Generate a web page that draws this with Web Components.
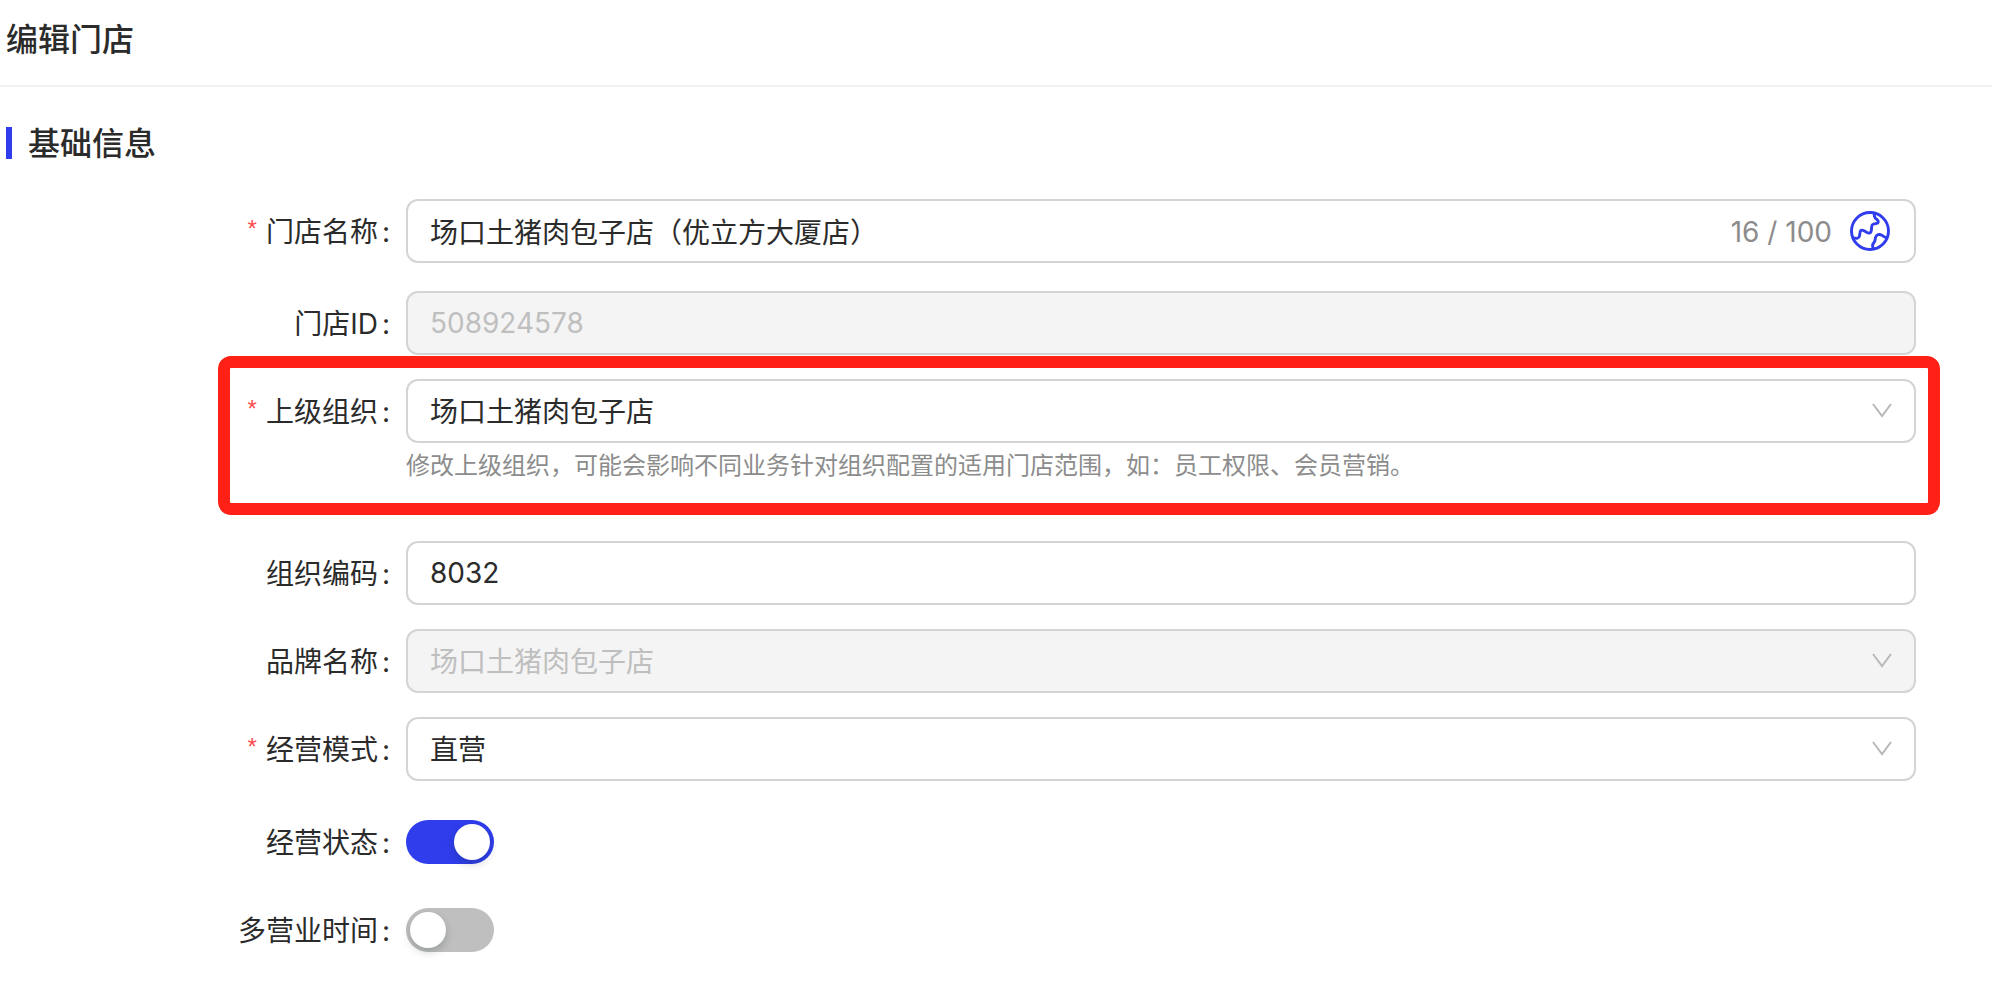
<!DOCTYPE html>
<html lang="zh-CN">
<head>
<meta charset="utf-8">
<meta name="viewport" content="width=device-width, initial-scale=1">
<title>编辑门店</title>
<style>
  body {
    margin: 0;
    background: #fff;
    color: #2b2b2b;
    font-family: Inter, "Noto Sans CJK SC", sans-serif;
    font-size: 28px;
  }
</style>
</head>
<body>
<store-page>
  <span slot="title">编辑门店</span>
  <form-section>
    <span slot="title">基础信息</span>
    <text-field label="门店名称" value="场口土猪肉包子店（优立方大厦店）" max="100" required></text-field>
    <text-field label="门店ID" value="508924578" disabled></text-field>
    <select-field label="上级组织" value="场口土猪肉包子店" required marked>修改上级组织，可能会影响不同业务针对组织配置的适用门店范围，如：员工权限、会员营销。</select-field>
    <text-field label="组织编码" value="8032"></text-field>
    <select-field label="品牌名称" value="场口土猪肉包子店" disabled></select-field>
    <select-field label="经营模式" value="直营" required></select-field>
    <switch-group>
      <switch-field label="经营状态" checked></switch-field>
      <switch-field label="多营业时间"></switch-field>
    </switch-group>
  </form-section>
</store-page>

<script>
'use strict';

(function () {
  class StorePage extends HTMLElement {
    constructor() {
      super();
      this.attachShadow({ mode: 'open' }).innerHTML = `
      <style>
        :host { display: block; }
        header {
          padding: 20px 6px 25px;
          border-bottom: 2px solid #f2f2f2;
        }
        h1 {
          margin: 0;
          font-size: 32px;
          font-weight: 500;
          line-height: 40px;
        }
        main { padding: 40px 76px 18px 0; }
      </style>
      <header><h1><slot name="title"></slot></h1></header>
      <main><slot></slot></main>
      `;
    }
  }

  class FormSection extends HTMLElement {
    constructor() {
      super();
      this.attachShadow({ mode: 'open' }).innerHTML = `
      <style>
        :host { display: block; }
        h2 {
          margin: 0 0 40px 6px;
          padding: 2px 0 0 16px;
          border-left: 6px solid #2f3dec;
          font-size: 32px;
          font-weight: 500;
          line-height: 30px;
        }
        form {
          display: flex;
          flex-direction: column;
          gap: 24px;
        }
      </style>
      <h2><slot name="title"></slot></h2>
      <form><slot></slot></form>
      `;
    }
  }

  class SwitchGroup extends HTMLElement {
    constructor() {
      super();
      this.attachShadow({ mode: 'open' }).innerHTML = `
      <style>
        :host {
          display: flex;
          flex-direction: column;
          gap: 24px;
          margin-top: 5px;
        }
      </style>
      <slot></slot>
      `;
    }
  }

  // Shared row: label column on the left, control on the right
  class BaseField extends HTMLElement {
    connectedCallback() {
      if (this.shadowRoot) return;
      this.attachShadow({ mode: 'open' }).innerHTML = `
      <style>
        :host {
          display: grid;
          grid-template-columns: 406px minmax(0, 1fr);
          position: relative;
        }
        label {
          display: flex;
          justify-content: flex-end;
          padding-top: 2px;
          line-height: 62px;
        }
        label::after {
          content: ":";
          margin: 0 16px 0 4px;
        }
        :host([required]) label::before {
          content: "*";
          margin-right: 9px;
          color: #ff4d4f;
          font-family: "Liberation Sans", sans-serif;
          font-size: 24px;
          line-height: 56px;
        }
        .box {
          display: flex;
          align-items: center;
          box-sizing: border-box;
          height: 64px;
          border: 2px solid #d4d4d4;
          border-radius: 12px;
          background: #fff;
        }
        :host([disabled]) .box { background: #f4f4f4; }
        .box input, .box select {
          flex: 1;
          min-width: 0;
          height: 100%;
          margin: 0;
          padding: 0 22px;
          border: 0;
          outline: 0;
          appearance: none;
          background: none;
          color: inherit;
          font: inherit;
        }
        .box :disabled {
          color: #bfbfbf;
          opacity: 1;
        }
        ${this.styles()}
      </style>
      <label for="control">${this.getAttribute('label')}</label>
      <div class="content">${this.control()}</div>
      `;
    }

    styles() { return ''; }

    flag(name) { return this.hasAttribute(name) ? name : ''; }
  }

  class TextField extends BaseField {
    styles() {
      return `
        :host([max]) { margin-bottom: 4px; }
        .count {
          padding-top: 2px;
          color: #8c8c8c;
          white-space: nowrap;
        }
        button {
          display: flex;
          margin: 0 24px 0 18px;
          padding: 0;
          border: 0;
          background: none;
          color: #2f3dec;
          cursor: pointer;
        }
      `;
    }

    control() {
      const value = this.getAttribute('value');
      const max = this.getAttribute('max');
      const extra = max ? `
        <span class="count">${value.length} / ${max}</span>
        <button type="button" aria-label="多语言">
          <svg width="40" height="40" viewBox="0 0 40 40" fill="none" stroke="currentColor" stroke-width="2.9" stroke-linejoin="round">
            <circle cx="20" cy="20" r="18.5"/>
            <path d="M24.4 2 C24 4.5 24.2 6 25.6 7.4 L27.6 9.2 C28.8 10.5 28.4 12 26.8 12.4 L23.4 13.2 C22.2 13.5 21.8 14.4 21.7 15.6 L21.4 19.2 C21.2 22 19.2 22.8 17 21.6 L13.6 19.6 C11.6 18.6 10.2 19.4 10 21.4 L9.6 24.6 C9.2 27.4 6.6 28 2.8 26.6"/>
            <path d="M23.8 38 C22.2 35.8 22.2 33.6 23.8 31.8 C25.4 30.2 25 28.6 25.4 26.8 C26.2 23.4 29.4 22.6 32 24.4 C33.6 25.6 35 26.8 37.2 27"/>
          </svg>
        </button>` : '';
      return `<div class="box"><input id="control" type="text" value="${value}" ${this.flag('disabled')} ${this.flag('required')}>${extra}</div>`;
    }
  }

  class SelectField extends BaseField {
    styles() {
      return `
        .box { display: grid; }
        .box > * { grid-area: 1 / 1; }
        .box select { padding-top: 2px; }
        .box svg {
          justify-self: end;
          margin-right: 22px;
          pointer-events: none;
        }
        .help {
          padding: 5px 0 33px;
          color: #8c8c8c;
          font-size: 24px;
          line-height: 36px;
        }
        .mark {
          position: absolute;
          inset: -23px -24px 2px 218px;
          border: 12px solid #ff2116;
          border-radius: 13px;
          pointer-events: none;
        }
      `;
    }

    control() {
      const help = this.textContent.trim() ? '<div class="help"><slot></slot></div>' : '';
      const mark = this.hasAttribute('marked') ? '<div class="mark"></div>' : '';
      return `
        <div class="box">
          <select id="control" ${this.flag('disabled')} ${this.flag('required')}>
            <option>${this.getAttribute('value')}</option>
          </select>
          <svg width="20" height="16" viewBox="0 0 20 16" fill="none" stroke="#b8b8b8" stroke-width="2">
            <path d="M1 1 L10 13 L19 1"/>
          </svg>
        </div>
        ${help}${mark}`;
    }
  }

  class SwitchField extends BaseField {
    styles() {
      return `
        .content {
          display: flex;
          align-items: center;
        }
        input {
          appearance: none;
          width: 88px;
          height: 44px;
          margin: 0;
          padding: 4px;
          box-sizing: border-box;
          border-radius: 22px;
          background: #bfbfbf;
          cursor: pointer;
        }
        input::before {
          content: "";
          display: block;
          width: 36px;
          height: 36px;
          border-radius: 50%;
          background: #fff;
          box-shadow: 0 4px 8px rgba(0, 35, 11, .2);
        }
        input:checked { background: #2f3dec; }
        input:checked::before { margin-left: auto; }
      `;
    }

    control() {
      return `<input id="control" type="checkbox" role="switch" ${this.flag('checked')}>`;
    }
  }

  customElements.define('store-page', StorePage);
  customElements.define('form-section', FormSection);
  customElements.define('switch-group', SwitchGroup);
  customElements.define('text-field', TextField);
  customElements.define('select-field', SelectField);
  customElements.define('switch-field', SwitchField);
})();
</script>
</body>
</html>
